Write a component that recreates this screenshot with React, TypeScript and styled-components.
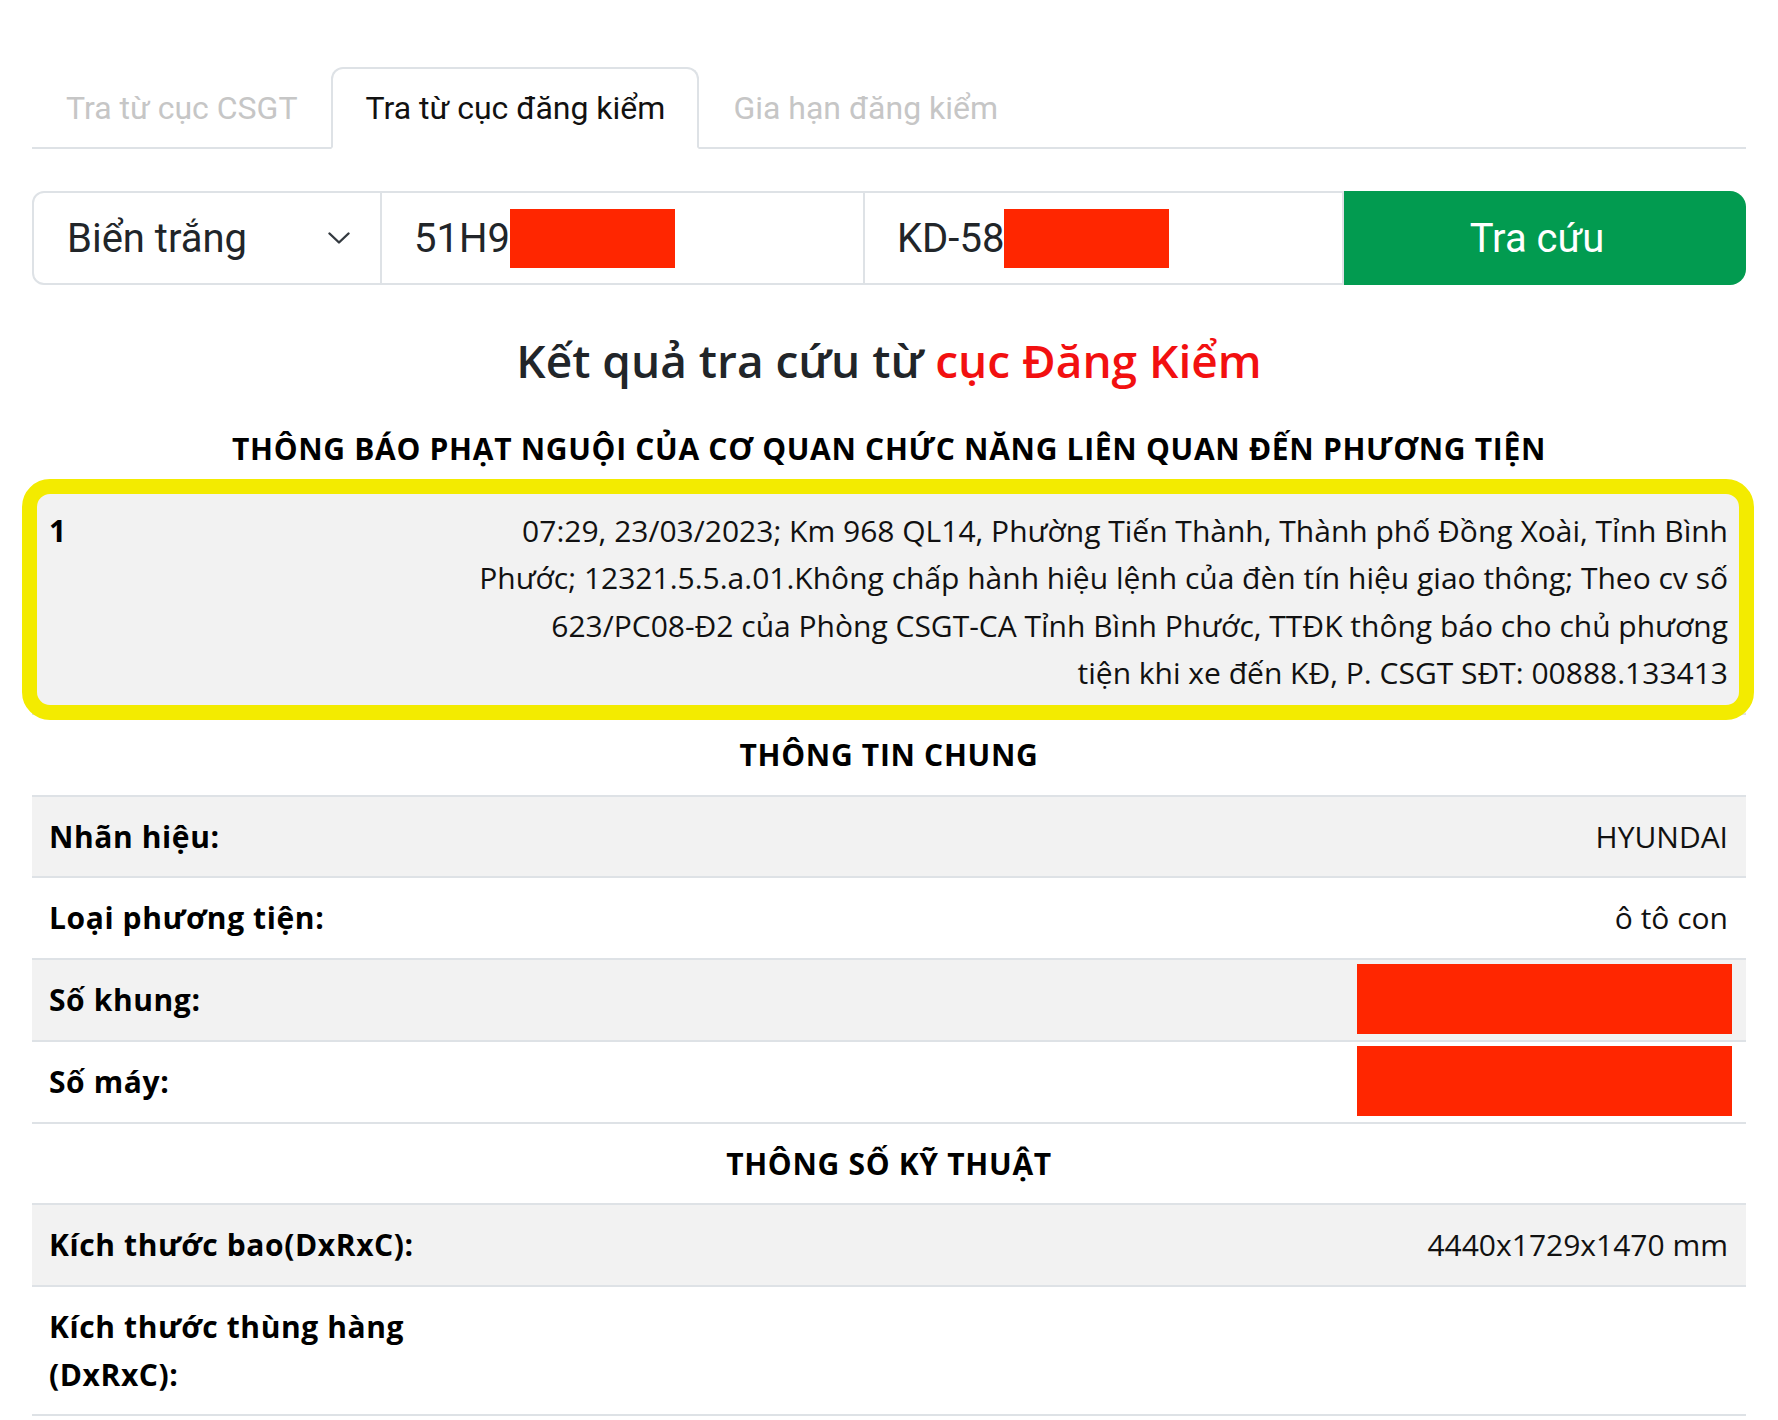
import React from 'react';
import styled, { createGlobalStyle } from 'styled-components';

const GlobalStyle = createGlobalStyle`
  html, body {
    margin: 0;
    padding: 0;
    background: #fff;
  }
  body {
    font-family: Roboto, 'Liberation Sans', sans-serif;
    color: #111;
  }
  * {
    box-sizing: border-box;
  }
`;

const Page = styled.div`
  padding: 67px 32px 0 32px;
`;

const Tabs = styled.div`
  display: flex;
  border-bottom: 2px solid #dee2e6;
`;

const Tab = styled.div<{ $active?: boolean }>`
  padding: 15px 32px;
  margin-bottom: -2px;
  font-size: 32px;
  line-height: 48px;
  border: 2px solid ${p => (p.$active ? '#dee2e6' : 'transparent')};
  border-bottom-color: ${p => (p.$active ? '#fff' : 'transparent')};
  border-radius: 12px 12px 0 0;
  background: ${p => (p.$active ? '#fff' : 'transparent')};
  color: ${p => (p.$active ? '#111' : '#c6c6c6')};
  cursor: pointer;
`;

const SearchBar = styled.div`
  display: flex;
  height: 94px;
  margin-top: 42px;
`;

const Select = styled.div`
  width: 350px;
  display: flex;
  align-items: center;
  justify-content: space-between;
  padding: 0 30px 0 33px;
  border: 2px solid #dee2e6;
  border-radius: 12px 0 0 12px;
  font-size: 40px;
  color: #212529;
`;

const Field = styled.div<{ $width: number }>`
  width: ${p => p.$width}px;
  display: flex;
  align-items: center;
  padding-left: 32px;
  border: 2px solid #dee2e6;
  border-left: none;
  font-size: 40px;
  color: #212529;
  white-space: nowrap;
`;

const Redact = styled.span<{ $w: number; $h: number }>`
  display: inline-block;
  flex-shrink: 0;
  width: ${p => p.$w}px;
  height: ${p => p.$h}px;
  background: #ff2600;
`;

const BlockRedact = styled(Redact)`
  display: block;
  margin: -12px -4px -10px auto;
`;

const SearchButton = styled.button`
  flex: 1;
  border: none;
  border-radius: 0 16px 16px 0;
  padding: 0 16px 0 0;
  background: #029b50;
  color: #fff;
  font-family: inherit;
  font-size: 40px;
  cursor: pointer;
`;

const Title = styled.h2`
  margin: 45px 0 17px;
  text-align: center;
  font-family: 'Open Sans', Roboto, sans-serif;
  font-size: 46px;
  line-height: 60px;
  font-weight: 600;
  color: #212529;

  span {
    color: #f21010;
  }
`;

const Table = styled.div`
  border-bottom: 2px solid #dee2e6;
  font-family: 'Open Sans', Roboto, sans-serif;
  font-size: 30px;
  line-height: 47.6px;
`;

const HeadRow = styled.div<{ $first?: boolean }>`
  padding: 16px;
  border-top: 2px solid ${p => (p.$first ? 'transparent' : '#dee2e6')};
  text-align: center;
  font-weight: 700;
  letter-spacing: 0.7px;
  color: #000;
`;

const Row = styled.div<{ $striped?: boolean }>`
  position: relative;
  display: grid;
  grid-template-columns: 410px 1fr;
  border-top: 2px solid #dee2e6;
  background: ${p => (p.$striped ? '#f2f2f2' : '#fff')};
`;

const Label = styled.div`
  padding: 16px 16px 16px 17px;
  font-weight: 700;
  letter-spacing: 0.6px;
  color: #000;
`;

const Value = styled.div`
  padding: 16px 18px 16px 16px;
  text-align: right;
  color: #111;
`;

const Highlight = styled.div`
  position: absolute;
  top: -12px;
  left: -10px;
  right: -8px;
  bottom: -7px;
  border: 15px solid #f3eb00;
  border-radius: 28px;
  pointer-events: none;
`;

const Chevron = () => (
  <svg width="22" height="12" viewBox="0 0 22 12" fill="none">
    <path d="M1.5 1.5 L11 10.5 L20.5 1.5" stroke="#343a40" strokeWidth="2.4" strokeLinecap="round" strokeLinejoin="round" />
  </svg>
);

const generalInfo = [
  { label: 'Nhãn hiệu:', value: 'HYUNDAI' },
  { label: 'Loại phương tiện:', value: 'ô tô con' },
  { label: 'Số khung:', redacted: true },
  { label: 'Số máy:', redacted: true },
];

const specs = [
  { label: 'Kích thước bao(DxRxC):', value: '4440x1729x1470 mm' },
  { label: 'Kích thước thùng hàng (DxRxC):', value: '' },
];

export default function App() {
  return (
    <Page>
      <GlobalStyle />
      <Tabs>
        <Tab>Tra từ cục CSGT</Tab>
        <Tab $active>Tra từ cục đăng kiểm</Tab>
        <Tab>Gia hạn đăng kiểm</Tab>
      </Tabs>

      <SearchBar>
        <Select>
          Biển trắng
          <Chevron />
        </Select>
        <Field $width={483}>
          51H9
          <Redact $w={165} $h={59} />
        </Field>
        <Field $width={479}>
          KD-58
          <Redact $w={165} $h={59} />
        </Field>
        <SearchButton>Tra cứu</SearchButton>
      </SearchBar>

      <Title>
        Kết quả tra cứu từ <span>cục Đăng Kiểm</span>
      </Title>

      <Table>
        <HeadRow $first>THÔNG BÁO PHẠT NGUỘI CỦA CƠ QUAN CHỨC NĂNG LIÊN QUAN ĐẾN PHƯƠNG TIỆN</HeadRow>
        <Row $striped>
          <Label>1</Label>
          <Value>
            07:29, 23/03/2023; Km 968 QL14, Phường Tiến Thành, Thành phố Đồng Xoài, Tỉnh Bình Phước;
            12321.5.5.a.01.Không chấp hành hiệu lệnh của đèn tín hiệu giao thông; Theo cv số 623/PC08-Đ2 của
            Phòng CSGT-CA Tỉnh Bình Phước, TTĐK thông báo cho chủ phương
            <br />
            tiện khi xe đến KĐ, P. CSGT SĐT: 00888.133413
          </Value>
          <Highlight />
        </Row>

        <HeadRow>THÔNG TIN CHUNG</HeadRow>
        {generalInfo.map((item, i) => (
          <Row key={item.label} $striped={i % 2 === 0}>
            <Label>{item.label}</Label>
            <Value>{item.redacted ? <BlockRedact $w={375} $h={70} /> : item.value}</Value>
          </Row>
        ))}

        <HeadRow>THÔNG SỐ KỸ THUẬT</HeadRow>
        {specs.map((item, i) => (
          <Row key={item.label} $striped={i % 2 === 0}>
            <Label>{item.label}</Label>
            <Value>{item.value}</Value>
          </Row>
        ))}
      </Table>
    </Page>
  );
}
